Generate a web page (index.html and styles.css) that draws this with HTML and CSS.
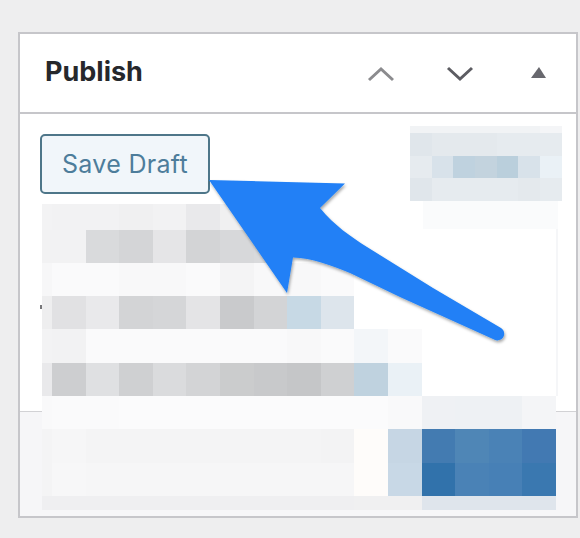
FILE: index.html
```html
<!DOCTYPE html>
<html lang="en">
<head>
    <meta charset="UTF-8">
    <meta name="viewport" content="width=device-width, initial-scale=1.0">
    <title>Publish</title>
    <link rel="stylesheet" href="styles.css">
</head>
<body>

<div class="panel">
    <div class="panel-header">
        <h2>Publish</h2>
        <div class="panel-actions">
            <svg class="icon icon-up" viewBox="0 0 28 16"><path d="M2 14 L14 3 L26 14"/></svg>
            <svg class="icon icon-down" viewBox="0 0 28 16"><path d="M2 2 L14 13 L26 2"/></svg>
            <svg class="icon icon-toggle" viewBox="0 0 28 16"><path d="M6 12 L14 1 L21 12 Z"/></svg>
        </div>
    </div>
    <div class="panel-body">
        <button type="button" class="save-draft">Save Draft</button>
    </div>
    <div class="panel-footer"></div>
</div>

<!-- blurred out part of the screenshot -->
<div class="mosaic mosaic-top">
    <div class="row">
        <i class="g-f3"></i><i class="wide g-f2"></i><i class="wide g-f2"></i><i class="wide g-f0"></i><i class="wide g-f2"></i><i class="wide g-e9"></i><i class="wide g-f0"></i><i class="wide g-f4"></i>
    </div>
    <div class="row">
        <i class="g-f2"></i><i class="wide g-f2"></i><i class="wide g-d9"></i><i class="wide g-d4"></i><i class="wide g-e5"></i><i class="wide g-d3"></i><i class="wide g-d7"></i><i class="wide g-d9"></i>
    </div>
    <div class="row">
        <i class="g-f7"></i><i class="wide g-fa"></i><i class="wide g-fa"></i><i class="wide g-f8"></i><i class="wide g-f8"></i><i class="wide g-fa"></i><i class="wide g-f4"></i><i class="wide g-f8"></i><i class="wide g-f8"></i><i class="wide g-fa"></i>
    </div>
    <div class="row">
        <i class="g-ee"></i><i class="wide g-e1"></i><i class="wide g-e9"></i><i class="wide g-d3"></i><i class="wide g-d5"></i><i class="wide g-e4"></i><i class="wide g-c9"></i><i class="wide g-d3"></i><i class="wide b-c7"></i><i class="wide b-dd"></i>
    </div>
    <div class="row">
        <i class="g-f3"></i><i class="wide g-f2"></i><i class="wide g-fa"></i><i class="wide g-fa"></i><i class="wide g-fa"></i><i class="wide g-fa"></i><i class="wide g-fa"></i><i class="wide g-fa"></i><i class="wide g-f8"></i><i class="wide g-fa"></i><i class="wide b-f3"></i><i class="wide g-fa"></i>
    </div>
    <div class="row">
        <i class="g-e9"></i><i class="wide g-cd"></i><i class="wide g-e0"></i><i class="wide g-cf"></i><i class="wide g-da"></i><i class="wide g-d3"></i><i class="wide g-cb"></i><i class="wide g-c8"></i><i class="wide g-c5"></i><i class="wide g-cf"></i><i class="wide b-bf"></i><i class="wide b-ea"></i>
    </div>
    <div class="row">
        <i class="g-f9"></i><i class="wide g-fa"></i><i class="wide g-fa"></i><i class="wide g-fb"></i><i class="wide g-fb"></i><i class="wide g-fb"></i><i class="wide g-fb"></i><i class="wide g-fb"></i><i class="wide g-fb"></i><i class="wide g-fb"></i><i class="wide g-fb"></i><i class="wide g-f9"></i><i class="wide b-ef"></i><i class="wide b-ee"></i><i class="wide b-ee"></i><i class="wide b-f4"></i>
    </div>
    <div class="row">
        <i class="g-f4"></i><i class="wide g-f6"></i><i class="wide g-f4"></i><i class="wide g-f4"></i><i class="wide g-f4"></i><i class="wide g-f4"></i><i class="wide g-f4"></i><i class="wide g-f4"></i><i class="wide g-f4"></i><i class="wide g-f3"></i><i class="wide warm"></i><i class="wide b-c6"></i><i class="wide b-43"></i><i class="wide b-4f"></i><i class="wide b-4a"></i><i class="wide b-42"></i>
    </div>
    <div class="row">
        <i class="g-f4"></i><i class="wide g-f7"></i><i class="wide g-f6"></i><i class="wide g-f6"></i><i class="wide g-f6"></i><i class="wide g-f6"></i><i class="wide g-f6"></i><i class="wide g-f6"></i><i class="wide g-f6"></i><i class="wide g-f6"></i><i class="wide warm"></i><i class="wide b-c8"></i><i class="wide b-31"></i><i class="wide b-4a"></i><i class="wide b-47"></i><i class="wide b-3a"></i>
    </div>
    <div class="row">
        <i class="g-ef"></i><i class="wide g-ef"></i><i class="wide g-ef"></i><i class="wide g-ef"></i><i class="wide g-ef"></i><i class="wide g-ef"></i><i class="wide g-ef"></i><i class="wide g-ef"></i><i class="wide g-ef"></i><i class="wide g-ef"></i><i class="wide g-f0"></i><i class="wide g-f0"></i><i class="wide b-df"></i><i class="wide b-df"></i><i class="wide b-df"></i><i class="wide b-df"></i>
    </div>
</div>

<div class="mosaic mosaic-side">
    <div class="row">
        <i class="b-f1"></i><i class="b-f1"></i><i class="b-f1"></i><i class="b-f1"></i><i class="b-f1"></i><i class="b-f1"></i><i class="b-f4"></i>
    </div>
    <div class="row">
        <i class="b-e0"></i><i class="b-e4"></i><i class="b-e4"></i><i class="b-e4"></i><i class="b-e6"></i><i class="b-e6"></i><i class="b-e6"></i>
    </div>
    <div class="row">
        <i class="b-e6"></i><i class="b-d8"></i><i class="b-bf"></i><i class="b-c3"></i><i class="b-ba"></i><i class="b-d8"></i><i class="b-ea"></i>
    </div>
    <div class="row">
        <i class="b-e0"></i><i class="b-e6"></i><i class="b-e6"></i><i class="b-e6"></i><i class="b-e6"></i><i class="b-e4"></i><i class="b-e6"></i>
    </div>
</div>
<div class="mosaic-fade"></div>
<div class="mosaic-line"></div>
<div class="radio-dot"></div>

<svg class="arrow" viewBox="0 0 580 538">
    <defs>
        <filter id="arrowShadow" x="-10%" y="-10%" width="120%" height="120%">
            <feDropShadow dx="1" dy="2" stdDeviation="1.5" flood-color="#000" flood-opacity="0.35"/>
        </filter>
    </defs>
    <path d="M209 180 L345 183.5 L320 208 C335 226 350 236 367 247 L433 288 L501 328 C506 331 505 339 499 340 C497 341 495 340 493 339 L400 297 L350 273 C330 265 312 258 293 257.5 L287 293 Z" filter="url(#arrowShadow)"/>
</svg>

</body>
</html>
```

FILE: styles.css
```css
body {
    font-family: Inter, 'Liberation Sans', sans-serif;
    background-color: #eeeeef;
    margin: 0;
    padding: 32px 2px 0 18px;
    height: 538px;
    box-sizing: border-box;
    overflow: hidden;
}

.panel {
    height: 482px;
    background-color: #ffffff;
    border: 2px solid #c6c6ca;
    display: flex;
    flex-direction: column;
}

.panel-header {
    height: 78px;
    flex: none;
    display: flex;
    justify-content: space-between;
    align-items: center;
    padding: 0 23px 0 25px;
    border-bottom: 2px solid #c6c6ca;
}

h2 {
    margin: 0 0 4px 0;
    font-size: 27px;
    font-weight: 700;
    color: #26282c;
}

.panel-actions {
    display: flex;
    gap: 51px;
    margin-top: 2px;
}

.icon {
    width: 28px;
    height: 16px;
    display: block;
    fill: none;
    stroke-width: 3;
}

.icon-up {
    stroke: #8b8b8e;
}

.icon-down {
    stroke: #5c5c62;
}

.icon-toggle {
    fill: #68686e;
}

.panel-body {
    flex: 1;
    padding: 20px;
}

.save-draft {
    width: 170px;
    height: 60px;
    padding: 0;
    display: block;
    font-family: inherit;
    font-size: 25px;
    letter-spacing: 0.3px;
    color: #4d7d9b;
    background-color: #f1f6fa;
    border: 2px solid #4e7689;
    border-radius: 5px;
}

.panel-footer {
    height: 104px;
    flex: none;
    background-color: #f6f6f8;
    border-top: 1px solid #d2d2d5;
}

.mosaic {
    position: absolute;
    display: grid;
}

.mosaic .row {
    display: flex;
}

.mosaic i {
    display: block;
}

.mosaic-top {
    left: 42px;
    top: 204px;
    grid-template-rows: 25.5px repeat(8, 33.3px) 14px;
}

.mosaic-top i {
    flex: 0 0 10px;
}

.mosaic-top i.wide {
    flex: 0 0 33.6px;
}

.mosaic-side {
    left: 410px;
    top: 126px;
    grid-template-rows: 7px 23px 22px 23px;
}

.mosaic-side i {
    flex: 0 0 21.7px;
}

.mosaic-fade {
    position: absolute;
    left: 423px;
    top: 201px;
    width: 135px;
    height: 28px;
    background-color: #fafbfc;
}

.mosaic-line {
    position: absolute;
    left: 556px;
    top: 229px;
    width: 2px;
    height: 167px;
    background-color: #f5f6f8;
}

.radio-dot {
    position: absolute;
    left: 40px;
    top: 305px;
    width: 2px;
    height: 4px;
    background-color: #77777a;
}

.arrow {
    position: absolute;
    left: 0;
    top: 0;
    width: 580px;
    height: 538px;
    fill: #2080f6;
}

/* mosaic colours */
.g-c5 { background-color: #c5c6c8; }
.g-c8 { background-color: #c8c9cb; }
.g-c9 { background-color: #c9cacc; }
.g-cb { background-color: #cbcccd; }
.g-cd { background-color: #cdced0; }
.g-cf { background-color: #cfd0d2; }
.g-d3 { background-color: #d3d4d6; }
.g-d4 { background-color: #d4d5d7; }
.g-d5 { background-color: #d5d6d8; }
.g-d7 { background-color: #d7d8da; }
.g-d9 { background-color: #d9dadc; }
.g-da { background-color: #dadbdd; }
.g-e0 { background-color: #dfe0e2; }
.g-e1 { background-color: #e1e1e3; }
.g-e4 { background-color: #e4e4e6; }
.g-e5 { background-color: #e5e5e7; }
.g-e9 { background-color: #e9e9eb; }
.g-ee { background-color: #eeeeef; }
.g-ef { background-color: #efeff1; }
.g-f0 { background-color: #f0f0f1; }
.g-f2 { background-color: #f2f2f3; }
.g-f3 { background-color: #f3f3f4; }
.g-f4 { background-color: #f4f4f5; }
.g-f6 { background-color: #f6f6f7; }
.g-f7 { background-color: #f7f7f8; }
.g-f8 { background-color: #f8f8f9; }
.g-f9 { background-color: #f9f9fa; }
.g-fa { background-color: #fafafb; }
.g-fb { background-color: #fbfbfc; }
.warm { background-color: #fefcfa; }

.b-31 { background-color: #3172ab; }
.b-3a { background-color: #3a78b0; }
.b-42 { background-color: #4279b2; }
.b-43 { background-color: #437bb1; }
.b-47 { background-color: #4780b6; }
.b-4a { background-color: #4a82b6; }
.b-4f { background-color: #4f86b6; }
.b-ba { background-color: #bacfdc; }
.b-bf { background-color: #bfd2df; }
.b-c3 { background-color: #c3d3de; }
.b-c6 { background-color: #c6d6e4; }
.b-c7 { background-color: #c7d9e5; }
.b-c8 { background-color: #c8d8e6; }
.b-d8 { background-color: #d8e2ea; }
.b-dd { background-color: #dde5ec; }
.b-df { background-color: #dfe5ec; }
.b-e0 { background-color: #e0e6eb; }
.b-e4 { background-color: #e4e9ed; }
.b-e6 { background-color: #e6ebef; }
.b-ea { background-color: #eaf1f6; }
.b-ee { background-color: #eef1f4; }
.b-ef { background-color: #eff1f4; }
.b-f1 { background-color: #f1f3f5; }
.b-f3 { background-color: #f3f6f9; }
.b-f4 { background-color: #f4f5f7; }
```
